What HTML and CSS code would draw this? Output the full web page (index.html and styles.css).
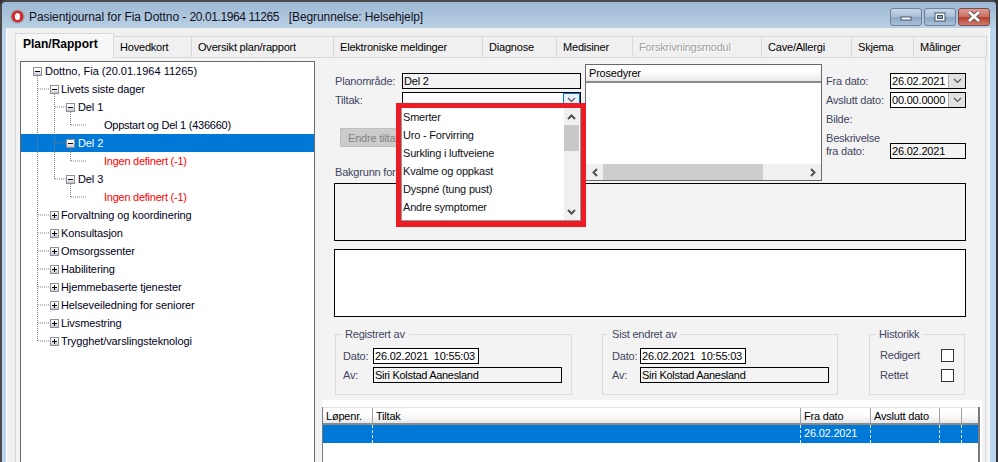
FILE: index.html
```html
<!DOCTYPE html>
<html>
<head>
  <meta charset="UTF-8">
  <meta name="viewport" content="width=device-width, initial-scale=1.0">
  <link rel="stylesheet" href="styles.css">
  <title>Pasientjournal</title>
</head>
<body>
  <svg class="defs" width="0" height="0">
    <symbol id="down" viewBox="0 0 9 6"><path d="M1 1 L4.5 4.5 L8 1" fill="none" stroke="#555" stroke-width="1.2"/></symbol>
    <symbol id="down-bold" viewBox="0 0 9 6"><path d="M1 1 L4.5 4.5 L8 1" fill="none" stroke="#505050" stroke-width="2"/></symbol>
    <symbol id="up-bold" viewBox="0 0 9 6"><path d="M1 5 L4.5 1.5 L8 5" fill="none" stroke="#505050" stroke-width="2"/></symbol>
    <symbol id="left-bold" viewBox="0 0 6 9"><path d="M5 1 L1.5 4.5 L5 8" fill="none" stroke="#505050" stroke-width="2"/></symbol>
    <symbol id="right-bold" viewBox="0 0 6 9"><path d="M1 1 L4.5 4.5 L1 8" fill="none" stroke="#505050" stroke-width="2"/></symbol>
  </svg>

  <div class="window">
    <div class="titlebar">
      <svg class="app-icon" viewBox="0 0 16 16">
        <circle cx="8" cy="8" r="7.5" fill="#9a9a9a"/>
        <circle cx="8" cy="8" r="6.2" fill="#d8232a"/>
        <ellipse cx="8" cy="8" rx="2.8" ry="3.8" fill="#fff"/>
      </svg>
      <span class="title-text">Pasientjournal for Fia Dottno - <span class="title-nr">20.01.1964 11265</span> &nbsp; <span class="title-why">[Begrunnelse: Helsehjelp]</span></span>
      <div class="caption-btns">
        <div class="cap-btn">
          <svg width="12" height="8" viewBox="0 0 12 8"><rect x="1" y="4" width="10" height="3" fill="#fff" stroke="#44556a"/></svg>
        </div>
        <div class="cap-btn">
          <svg width="12" height="10" viewBox="0 0 12 10"><rect x="1" y="1" width="10" height="8" fill="#fff" stroke="#44556a"/><rect x="3.5" y="3.5" width="5" height="3" fill="#8aa5c0" stroke="#44556a"/></svg>
        </div>
        <div class="cap-btn cap-close">
          <svg width="16" height="11" viewBox="0 0 16 11"><path d="M3 1 L13 10 M13 1 L3 10" stroke="#5a4a4a" stroke-width="4.4"/><path d="M3 1 L13 10 M13 1 L3 10" stroke="#fff" stroke-width="2.8"/></svg>
        </div>
      </div>
    </div>

    <div class="client">
      <div class="tabs">
        <div class="tab active">Plan/Rapport</div>
        <div class="tab">Hovedkort</div>
        <div class="tab">Oversikt plan/rapport</div>
        <div class="tab">Elektroniske meldinger</div>
        <div class="tab">Diagnose</div>
        <div class="tab">Medisiner</div>
        <div class="tab disabled">Forskrivningsmodul</div>
        <div class="tab">Cave/Allergi</div>
        <div class="tab">Skjema</div>
        <div class="tab">Målinger</div>
      </div>

      <div class="page">
        <div class="tree">
          <svg class="tree-lines" width="293" height="300">
            <path d="M16.5 14V279 M33.5 32V117 M49.5 50V63 M49.5 86V99 M49.5 122V135
                     M17 27H29 M17 153H29 M17 171H29 M17 189H29 M17 207H29 M17 225H29 M17 243H29 M17 261H29 M17 279H29
                     M34 45H45 M34 81H45 M34 117H45
                     M50 63H66 M50 99H66 M50 135H66" />
          </svg>
          <div class="row lvl0"><span class="exp open"></span>Dottno, Fia (20.01.1964 11265)</div>
          <div class="row lvl1"><span class="exp open"></span>Livets siste dager</div>
          <div class="row lvl2"><span class="exp open"></span>Del 1</div>
          <div class="row leaf">Oppstart og Del 1 (436660)</div>
          <div class="row lvl2 selected"><span class="exp open"></span>Del 2</div>
          <div class="row leaf red">Ingen definert (-1)</div>
          <div class="row lvl2"><span class="exp open"></span>Del 3</div>
          <div class="row leaf red">Ingen definert (-1)</div>
          <div class="row lvl1"><span class="exp"></span>Forvaltning og koordinering</div>
          <div class="row lvl1"><span class="exp"></span>Konsultasjon</div>
          <div class="row lvl1"><span class="exp"></span>Omsorgssenter</div>
          <div class="row lvl1"><span class="exp"></span>Habilitering</div>
          <div class="row lvl1"><span class="exp"></span>Hjemmebaserte tjenester</div>
          <div class="row lvl1"><span class="exp"></span>Helseveiledning for seniorer</div>
          <div class="row lvl1"><span class="exp"></span>Livsmestring</div>
          <div class="row lvl1"><span class="exp"></span>Trygghet/varslingsteknologi</div>
        </div>

        <div class="main">
          <div class="top">
            <div class="plan">
              <div class="field-row">
                <label>Planområde:</label>
                <div class="box">Del 2</div>
              </div>
              <div class="field-row">
                <label>Tiltak:</label>
                <div class="box combo"><span></span><div class="combo-btn focus"><svg width="9" height="6"><use href="#down"/></svg></div></div>
              </div>
              <button class="btn-endre">Endre tiltak</button>
              <label class="bakgrunn">Bakgrunn for</label>
            </div>

            <div class="prosedyrer">
              <div class="list-head">Prosedyrer</div>
              <div class="list-body"></div>
              <div class="hscroll">
                <div class="hs-arrow"><svg width="6" height="9"><use href="#left-bold"/></svg></div>
                <div class="hs-thumb"></div>
                <div class="hs-arrow"><svg width="6" height="9"><use href="#right-bold"/></svg></div>
              </div>
            </div>

            <div class="dates">
              <label>Fra dato:</label>
              <div class="box combo white"><span>26.02.2021</span><div class="combo-btn"><svg width="9" height="6"><use href="#down"/></svg></div></div>
              <label>Avslutt dato:</label>
              <div class="box combo white"><span>00.00.0000</span><div class="combo-btn"><svg width="9" height="6"><use href="#down"/></svg></div></div>
              <label class="bilde">Bilde:</label>
              <span></span>
              <label class="beskr">Beskrivelse<br>fra dato:</label>
              <div class="box beskr-box">26.02.2021</div>
            </div>
          </div>

          <div class="text-box"></div>
          <div class="text-box white"></div>

          <div class="groups">
            <fieldset class="group reg">
              <legend>Registrert av</legend>
              <div class="group-row"><label>Dato:</label><div class="box white short">26.02.2021&nbsp; 10:55:03</div></div>
              <div class="group-row"><label>Av:</label><div class="box long">Siri Kolstad Aanesland</div></div>
            </fieldset>
            <fieldset class="group endret">
              <legend>Sist endret av</legend>
              <div class="group-row"><label>Dato:</label><div class="box white short">26.02.2021&nbsp; 10:55:03</div></div>
              <div class="group-row"><label>Av:</label><div class="box long">Siri Kolstad Aanesland</div></div>
            </fieldset>
            <fieldset class="group hist">
              <legend>Historikk</legend>
              <div class="hist-row"><label>Redigert</label><span class="check"></span></div>
              <div class="hist-row"><label>Rettet</label><span class="check"></span></div>
            </fieldset>
          </div>

          <div class="table-wrap">
            <div class="table">
              <div class="t-row t-head">
                <div>Løpenr.</div><div>Tiltak</div><div>Fra dato</div><div>Avslutt dato</div><div></div><div></div>
              </div>
              <div class="t-row t-sel">
                <div></div><div></div><div>26.02.2021</div><div></div><div></div><div></div>
              </div>
            </div>
          </div>
        </div>

        <!-- apen nedtrekksliste, markert med rod ramme -->
        <div class="dropdown">
          <div class="dd-inner">
            <ul class="dd-list">
              <li>Smerter</li>
              <li>Uro - Forvirring</li>
              <li>Surkling i luftveiene</li>
              <li>Kvalme og oppkast</li>
              <li>Dyspné (tung pust)</li>
              <li>Andre symptomer</li>
            </ul>
            <div class="vscroll">
              <div class="vs-arrow"><svg width="9" height="6"><use href="#up-bold"/></svg></div>
              <div class="vs-thumb"></div>
              <div class="vs-fill"></div>
              <div class="vs-arrow"><svg width="9" height="6"><use href="#down-bold"/></svg></div>
            </div>
          </div>
        </div>
      </div>
    </div>
  </div>
</body>
</html>
```

FILE: styles.css
```css
* {
  box-sizing: border-box;
}

html, body {
  margin: 0;
  padding: 0;
  height: 100%;
  overflow: hidden;
}

body {
  font-family: "Liberation Sans", Arial, sans-serif;
  font-size: 11px;
  letter-spacing: -0.2px;
  color: #000;
  background: #333;
}

.defs {
  display: block;
  height: 0;
}

label {
  color: #3f4660;
}

/* vindu */
.window {
  width: 998px;
  height: 462px;
  overflow: hidden;
  border: 2px solid #4a4a4a;
  border-bottom: 0;
  border-radius: 6px 6px 0 0;
  background: #bcd5ee;
  border-right-color: #333;
  display: flex;
  flex-direction: column;
}

.titlebar {
  height: 26px;
  flex: none;
  display: flex;
  align-items: center;
  padding: 3px 0 0 8px;
  background: linear-gradient(to bottom, #9db8d4, #b9d0e4);
}

.app-icon {
  width: 15px;
  height: 15px;
  margin-right: 4px;
}

.title-text {
  font-size: 12px;
  letter-spacing: -0.07px;
  color: #101020;
  white-space: nowrap;
}

.title-nr {
  letter-spacing: -0.4px;
}

.title-why {
  letter-spacing: -0.1px;
}

.caption-btns {
  margin-left: auto;
  margin-right: 6px;
  display: flex;
  gap: 2px;
}

.cap-btn {
  width: 32px;
  height: 18px;
  border: 1px solid #6e8197;
  border-radius: 3px;
  display: flex;
  align-items: center;
  justify-content: center;
  background: linear-gradient(to bottom, #c6d6e6 0, #a9bfd6 48%, #8ba7c4 52%, #a9c0d8 100%);
}

.cap-close {
  border-color: #7a4a48;
  background: linear-gradient(to bottom, #dc9c92 0, #cc6f62 48%, #b73f2f 52%, #cf7c70 100%);
}

.client {
  flex: 1;
  min-height: 0;
  margin: 0 6px 0 4px;
  padding: 5px 3px 0 8px;
  background: #f0f0f0;
  border-left: 1px solid #fff;
  border-right: 1px solid #fff;
  display: flex;
  flex-direction: column;
}

/* faner */
.tabs {
  display: grid;
  grid-template-columns: 99px 78px 142px 149px 74px 76px 129px 90px 62px 73px;
  height: 25px;
  flex: none;
  align-items: end;
}

.tab {
  height: 22px;
  padding: 0 0 0 6px;
  line-height: 20px;
  background: #f0f0f0;
  border-top: 1px solid #d9d9d9;
  border-right: 1px solid #d9d9d9;
  border-bottom: 1px solid #d9d9d9;
  white-space: nowrap;
}

.tab.active {
  height: 25px;
  padding-left: 7px;
  font-size: 12px;
  font-weight: bold;
  letter-spacing: 0;
  line-height: 21px;
  background: #f7f7f7;
  border-left: 1px solid #d9d9d9;
  border-bottom: 0;
  position: relative;
  z-index: 1;
}

.tab.disabled {
  color: #a0a0a0;
  text-shadow: 1px 1px 0 #fff;
}

.page {
  position: relative;
  flex: 1;
  min-height: 0;
  display: flex;
  padding: 3px 0 0 4px;
  background: #f3f3f3;
  border-left: 1px solid #d9d9d9;
  border-right: 1px solid #d9d9d9;
}

/* tre */
.tree {
  position: relative;
  flex: none;
  width: 295px;
  height: 420px;
  background: #fff;
  border: 1px solid #696969;
  color: #000020;
  letter-spacing: -0.1px;
}

.tree-lines {
  position: absolute;
  left: 0;
  top: 0;
  z-index: 1;
}

.tree-lines path {
  fill: none;
  stroke: #808080;
  stroke-width: 1;
  stroke-dasharray: 1 1;
}

.row {
  height: 18px;
  display: flex;
  align-items: center;
  white-space: nowrap;
}

.lvl0 { padding-left: 12px; letter-spacing: 0; }
.lvl1 { padding-left: 29px; }
.lvl2 { padding-left: 45px; }
.leaf { padding-left: 83px; letter-spacing: -0.25px; }

.red {
  color: #f00;
}

.selected {
  background: #0078d7;
  color: #fff;
}

.exp {
  position: relative;
  z-index: 2;
  width: 9px;
  height: 9px;
  margin-right: 2px;
  border: 1px solid #8a9099;
  background: linear-gradient(to bottom, #fff 30%, #c3c7cc);
  flex: none;
}

.lvl0 .exp {
  margin-right: 3px;
}

.lvl2 .exp {
  margin-right: 3px;
}

.exp::before {
  content: "";
  position: absolute;
  left: 1px;
  top: 3px;
  width: 5px;
  height: 1px;
  background: #000;
}

.exp:not(.open)::after {
  content: "";
  position: absolute;
  left: 3px;
  top: 1px;
  width: 1px;
  height: 5px;
  background: #000;
}

/* skjema */
.main {
  flex: 1;
  min-width: 0;
}

.top {
  display: flex;
  height: 119px;
  margin: 3px 0 0 20px;
}

.plan {
  width: 246px;
  padding-top: 9px;
  flex: none;
}

.field-row {
  display: grid;
  grid-template-columns: 67px 179px;
  align-items: center;
  margin-bottom: 3px;
}

.box {
  height: 16px;
  border: 1px solid #000;
  padding-left: 1px;
  line-height: 14px;
  white-space: nowrap;
}

.white {
  background: #fff;
}

.field-row .combo {
  background: #fff;
}

.combo {
  display: flex;
  justify-content: space-between;
}

.combo-btn {
  width: 17px;
  height: 14px;
  flex: none;
  background: #e1e1e1;
  border-left: 1px solid #adadad;
  display: flex;
  align-items: center;
  justify-content: center;
}

.combo-btn.focus {
  background: #e5f1fb;
  border: 1px solid #0078d7;
}

.btn-endre {
  display: block;
  width: 100px;
  height: 19px;
  margin: 20px 0 0 5px;
  padding: 0 0 0 7px;
  background: #cccccc;
  border: 1px solid #bfbfbf;
  color: #838383;
  font: inherit;
  letter-spacing: inherit;
  text-align: left;
}

.bakgrunn {
  display: block;
  margin-top: 19px;
}

.prosedyrer {
  width: 237px;
  height: 117px;
  margin-left: 4px;
  flex: none;
  border: 1px solid #696969;
  background: #fff;
  display: flex;
  flex-direction: column;
}

.list-head {
  height: 18px;
  padding-left: 3px;
  line-height: 17px;
  background: linear-gradient(to bottom, #fff 40%, #e8e8e8);
  border-bottom: 2px solid #8a8a8a;
}

.list-body {
  flex: 1;
}

.hscroll {
  height: 16px;
  display: flex;
  background: #f0f0f0;
}

.hs-arrow {
  width: 17px;
  display: flex;
  align-items: center;
  justify-content: center;
}

.hs-thumb {
  width: 160px;
  background: #cdcdcd;
}

.hscroll .hs-arrow:last-child {
  margin-left: auto;
}

.dates {
  width: 140px;
  margin-left: 4px;
  padding-top: 9px;
  flex: none;
  display: grid;
  grid-template-columns: 64px 76px;
  grid-auto-rows: 16px;
  row-gap: 3px;
  align-items: center;
}

.beskr {
  line-height: 13px;
  align-self: start;
  height: 26px;
  margin-top: 2px;
}

.beskr-box {
  align-self: start;
  margin-top: 13px;
}

.text-box {
  width: 632px;
  height: 58px;
  margin: 0 0 8px 19px;
  border: 1px solid #000;
}

.text-box.white {
  height: 68px;
  margin-bottom: 0;
  background: #fff;
}

/* grupper */
.groups {
  display: flex;
  margin: 11px 0 0 20px;
  align-items: flex-start;
}

.group {
  margin: 0;
  height: 67px;
  padding: 7px 0 0 7px;
  border: 1px solid #dcdcdc;
  min-width: 0;
}

.group legend {
  margin-left: -1px;
  padding: 0 4px 0 3px;
  color: #3f4660;
  line-height: 13px;
}

.reg { width: 237px; }
.endret { width: 236px; margin-left: 30px; padding-left: 9px; }
.hist { width: 96px; margin-left: 31px; padding-left: 10px; }

.endret legend {
  margin-left: -3px;
}

.hist legend {
  margin-left: -4px;
}

.group-row {
  display: flex;
  align-items: center;
  height: 16px;
  margin-bottom: 3px;
}

.group-row label {
  width: 30px;
}

.endret .group-row label {
  width: 28px;
}

.short {
  width: 106px;
}

.long {
  width: 189px;
  letter-spacing: -0.3px;
}

.hist-row {
  display: flex;
  align-items: center;
  justify-content: space-between;
  height: 14px;
  margin: 0 10px 6px 0;
}

.check {
  width: 13px;
  height: 13px;
  background: #fff;
  border: 1px solid #333;
}

/* tabell */
.table-wrap {
  width: 660px;
  height: 70px;
  margin: 5px 0 0 7px;
  padding-top: 7px;
  background: #fff;
}

.table {
  width: 658px;
  height: 63px;
  border-left: 1px solid #7a7a7a;
  border-right: 2px solid #7a7a7a;
}

.t-row {
  display: grid;
  grid-template-columns: 50px 428px 70px 69px 22px 14px;
  height: 18px;
  line-height: 17px;
}

.t-head {
  background: linear-gradient(to bottom, #fff 40%, #e6e6e6);
  border-bottom: 2px solid #8a8a8a;
  border-top: 1px solid #e4e4e4;
}

.t-head div {
  padding-left: 3px;
  border-right: 1px solid #a0a0a0;
  white-space: nowrap;
}

.t-head div:last-child {
  border-right: 0;
}

.t-sel {
  background: #0078d7;
  color: #fff;
}

.t-sel div {
  padding-left: 3px;
  border-right: 1px dashed #e4eef8;
}

.t-sel div:last-child {
  border-right: 0;
}

/* nedtrekksliste */
.dropdown {
  position: absolute;
  left: 380px;
  top: 45px;
  width: 190px;
  height: 124px;
  border: 5px solid #ed1c24;
  z-index: 3;
  background: #ed1c24;
}

.dd-inner {
  height: 113px;
  display: flex;
  background: #fff;
  border: 1px solid #9a9a9a;
  border-top: 0;
}

.dd-list {
  list-style: none;
  margin: 0;
  padding: 0;
  flex: 1;
  color: #101020;
  letter-spacing: -0.2px;
}

.dd-list li {
  height: 18px;
  line-height: 18px;
  padding-left: 1px;
}

.vscroll {
  width: 15px;
  margin-right: 1px;
  background: #f0f0f0;
  display: flex;
  flex-direction: column;
}

.vs-arrow {
  height: 17px;
  flex: none;
  display: flex;
  align-items: center;
  justify-content: center;
}

.vs-thumb {
  height: 26px;
  background: #c8c8c8;
}

.vs-fill {
  flex: 1;
}
```
